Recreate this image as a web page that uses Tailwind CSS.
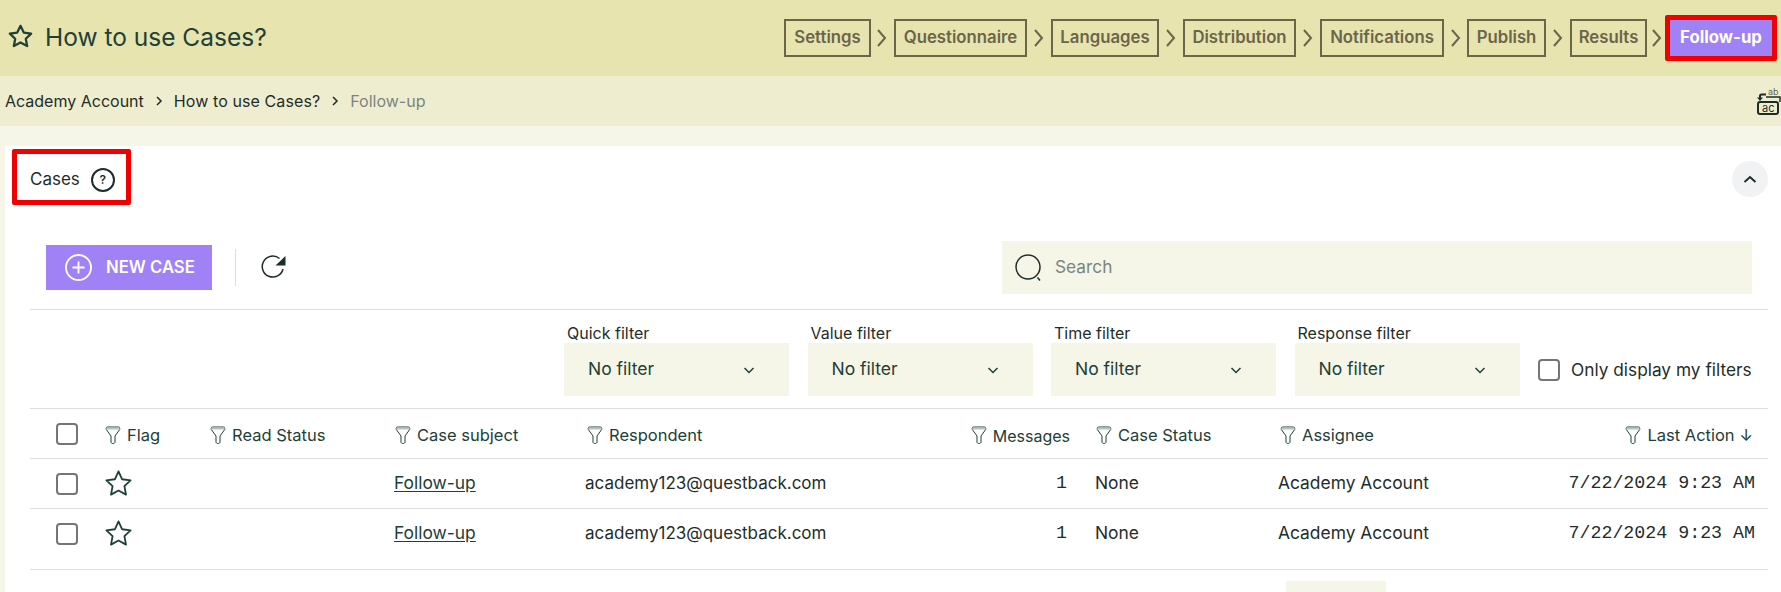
<!DOCTYPE html>
<html lang="en">
<head>
    <meta charset="UTF-8">
    <title>How to use Cases?</title>
    <script src="https://cdn.jsdelivr.net/npm/@tailwindcss/browser@4"></script>
</head>
<body class="bg-[#f5f5e8] font-['Inter',sans-serif] text-[#1f2d2a] h-[592px] overflow-hidden">
    <!-- top bar -->
    <header class="h-[76px] bg-[#e7e4b0] flex items-center justify-between pl-[7px] pr-1">
        <div class="flex items-center gap-[11px] -mt-[2px]">
            <svg class="-mt-[2px] w-[27px] h-[27px]" viewBox="0 0 24 24" fill="none" stroke="#1e4037" stroke-width="2" stroke-linejoin="round"><path d="M12 2.500l2.900 6 6.600.9-4.800 4.600 1.200 6.500-5.900-3.200-5.900 3.200 1.200-6.500L2.500 9.400l6.600-.9z"/></svg>
            <h1 class="text-[24.500px] text-[#1e4037]">How to use Cases?</h1>
        </div>
        <nav class="flex items-center text-[16.750px] font-semibold text-[#6b6549]">
            <a class="w-[87px] h-[38px] border-2 border-[#6b6549] flex items-center justify-center">Settings</a>
            <svg class="w-[23px] h-[20px]" viewBox="0 0 23 20" fill="none" stroke="#6b6549" stroke-width="2"><path d="M7 2l7 8-7 8"/></svg>
            <a class="w-[133px] h-[38px] border-2 border-[#6b6549] flex items-center justify-center">Questionnaire</a>
            <svg class="w-[24px] h-[20px]" viewBox="0 0 24 20" fill="none" stroke="#6b6549" stroke-width="2"><path d="M8 2l7 8-7 8"/></svg>
            <a class="w-[108px] h-[38px] border-2 border-[#6b6549] flex items-center justify-center">Languages</a>
            <svg class="w-[24px] h-[20px]" viewBox="0 0 24 20" fill="none" stroke="#6b6549" stroke-width="2"><path d="M8 2l7 8-7 8"/></svg>
            <a class="w-[113px] h-[38px] border-2 border-[#6b6549] flex items-center justify-center">Distribution</a>
            <svg class="w-[24px] h-[20px]" viewBox="0 0 24 20" fill="none" stroke="#6b6549" stroke-width="2"><path d="M8 2l7 8-7 8"/></svg>
            <a class="w-[124px] h-[38px] border-2 border-[#6b6549] flex items-center justify-center">Notifications</a>
            <svg class="w-[23px] h-[20px]" viewBox="0 0 23 20" fill="none" stroke="#6b6549" stroke-width="2"><path d="M8 2l7 8-7 8"/></svg>
            <a class="w-[79px] h-[38px] border-2 border-[#6b6549] flex items-center justify-center">Publish</a>
            <svg class="w-[24px] h-[20px]" viewBox="0 0 24 20" fill="none" stroke="#6b6549" stroke-width="2"><path d="M8 2l7 8-7 8"/></svg>
            <a class="w-[77px] h-[38px] border-2 border-[#6b6549] flex items-center justify-center">Results</a>
            <svg class="w-[18px] h-[20px]" viewBox="0 0 18 20" fill="none" stroke="#6b6549" stroke-width="2"><path d="M6 2l7 8-7 8"/></svg>
            <a class="w-[112px] h-[46px] border-[5px] border-[#f00000] rounded-[2px] bg-[#a082f6] text-white flex items-center justify-center font-bold">Follow-up</a>
        </nav>
    </header>

    <!-- breadcrumb -->
    <div class="h-[50px] bg-[#efedcf] flex items-center justify-between pl-[5px] text-[16px]">
        <div class="flex items-center">
            <span>Academy Account</span>
            <svg class="w-[30px] h-3" viewBox="0 0 30 12" fill="none" stroke="#1f2d2a" stroke-width="1.500"><path d="M13 2l4 4-4 4"/></svg>
            <span class="tracking-[0.1px]">How to use Cases?</span>
            <svg class="w-[30px] h-3" viewBox="0 0 30 12" fill="none" stroke="#1f2d2a" stroke-width="1.500"><path d="M13 2l4 4-4 4"/></svg>
            <span class="text-[#7a8580]">Follow-up</span>
        </div>
        <svg class="w-[25px] h-[28px]" viewBox="0 0 25 28" fill="none" stroke="#1f2d2a">
            <text x="12" y="8" font-size="9" fill="#6b6549" stroke="none" font-family="Inter">ab</text>
            <path d="M10 10h14v5" stroke-width="1.500"/>
            <path d="M10 7.500H5.500a1.500 1.500 0 0 0-1.500 1.500v2" stroke-width="2"/>
            <path d="M1 10.500h6l-3 3.500z" fill="#1f2d2a" stroke="none"/>
            <rect x="2" y="15" width="20" height="12" rx="2" stroke-width="2"/>
            <text x="6" y="25" font-size="11" fill="#1f2d2a" stroke="none" font-family="Inter">ac</text>
        </svg>
    </div>

    <!-- cases panel -->
    <main class="mt-5 ml-[5px] bg-white h-[446px]">
        <div class="h-[62px] flex items-start justify-between pr-[13px]">
            <div class="mt-[3px] ml-[7px] w-[119px] h-[56px] border-[5px] border-[#f00000] rounded-[2px] flex items-center pt-[6px] pl-[13px] gap-[11px] text-[17px]">
                <span>Cases</span>
                <span class="w-6 h-6 rounded-full border-2 border-[#1f2d2a] flex items-center justify-center text-[12px] font-semibold">?</span>
            </div>
            <button class="mt-[15px] w-[36px] h-[36px] rounded-full bg-[#f1f2f4] flex items-center justify-center">
                <svg class="w-4 h-4" viewBox="0 0 16 16" fill="none" stroke="#1f2d2a" stroke-width="2"><path d="M2.500 11l5.500-5 5.500 5"/></svg>
            </button>
        </div>

        <!-- toolbar -->
        <div class="mt-[33px] ml-[25px] mr-[13px] h-[69px] pb-[15px] pl-4 pr-4 border-b border-[#dedede] flex items-start">
            <button class="mt-1 w-[166px] h-[45px] bg-[#a082f6] text-white font-semibold text-[16.700px] flex items-center pl-[19px] gap-[14px]">
                <svg class="w-[27px] h-[27px]" viewBox="0 0 27 27" fill="none" stroke="#fff" stroke-width="1.800"><circle cx="13.500" cy="13.500" r="12.500"/><path d="M13.500 7.500v12M7.500 13.500h12"/></svg>
                NEW CASE
            </button>
            <div class="mt-2 ml-[23px] w-px h-[37px] bg-[#dedede]"></div>
            <svg class="mt-[13px] ml-[25px] w-[25px] h-[25px]" viewBox="0 0 25 25" fill="none" stroke="#1f2d2a" stroke-width="1.500"><path d="M22 15a10.500 10.500 0 1 1-3.500-10.500"/><path d="M24.500 2v9.500H14.500z" fill="#1f2d2a" stroke="none"/></svg>
            <div class="ml-auto w-[750px] h-[53px] bg-[#f5f5e8] flex items-center pl-[13px] pb-[1px] gap-[13px] text-[17.300px] text-[#7a8580]">
                <svg class="w-[27px] h-[27px]" viewBox="0 0 27 27" fill="none" stroke="#1f2d2a" stroke-width="1.500"><circle cx="13" cy="13" r="12"/><path d="M22.500 23.500l2.500 3"/></svg>
                Search
            </div>
        </div>

        <!-- filters -->
        <div class="ml-[25px] mr-[13px] h-[99px] border-b border-[#dedede] flex items-end justify-end pb-3 pr-4 gap-[18.500px]">
            <label class="block w-[225px] text-[16px]">
                <span class="block pl-[3px] mb-[-2px]">Quick filter</span>
                <span class="h-[53px] bg-[#f5f5e8] flex items-center justify-between pl-6 pr-[34px] text-[17.500px] text-[#1e4037]">No filter
                    <svg class="w-3 h-3" viewBox="0 0 12 12" fill="none" stroke="#1e4037" stroke-width="1.500"><path d="M1.500 4l4.500 4.500L10.500 4"/></svg>
                </span>
            </label>
            <label class="block w-[225px] text-[16px]">
                <span class="block pl-[3px] mb-[-2px]">Value filter</span>
                <span class="h-[53px] bg-[#f5f5e8] flex items-center justify-between pl-6 pr-[34px] text-[17.500px] text-[#1e4037]">No filter
                    <svg class="w-3 h-3" viewBox="0 0 12 12" fill="none" stroke="#1e4037" stroke-width="1.500"><path d="M1.500 4l4.500 4.500L10.500 4"/></svg>
                </span>
            </label>
            <label class="block w-[225px] text-[16px]">
                <span class="block pl-[3px] mb-[-2px]">Time filter</span>
                <span class="h-[53px] bg-[#f5f5e8] flex items-center justify-between pl-6 pr-[34px] text-[17.500px] text-[#1e4037]">No filter
                    <svg class="w-3 h-3" viewBox="0 0 12 12" fill="none" stroke="#1e4037" stroke-width="1.500"><path d="M1.500 4l4.500 4.500L10.500 4"/></svg>
                </span>
            </label>
            <label class="block w-[225px] text-[16px]">
                <span class="block pl-[3px] mb-[-2px]">Response filter</span>
                <span class="h-[53px] bg-[#f5f5e8] flex items-center justify-between pl-6 pr-[34px] text-[17.500px] text-[#1e4037]">No filter
                    <svg class="w-3 h-3" viewBox="0 0 12 12" fill="none" stroke="#1e4037" stroke-width="1.500"><path d="M1.500 4l4.500 4.500L10.500 4"/></svg>
                </span>
            </label>
            <label class="w-[214px] h-[53px] flex items-center gap-[11px] text-[17.300px] whitespace-nowrap">
                <span class="w-[22px] h-[22px] shrink-0 rounded-[4px] border-2 border-[#757575]"></span>
                Only display my filters
            </label>
        </div>

        <!-- table -->
        <div class="ml-[25px] mr-[13px] text-[17.400px]">
            <div class="h-[50px] pt-[4px] border-b border-[#dedede] grid grid-cols-[75px_105px_185px_190px_490px_21px_184px_1fr] items-center text-[16.500px] text-[#1e4037]">
                <span class="-mt-[4px] ml-[26px] w-[22px] h-[22px] rounded-[4px] border-2 border-[#757575]"></span>
                <span class="flex items-center gap-[6px]"><svg class="w-[16px] h-[19px]" viewBox="0 0 15 19" fill="none" stroke="#1e4037"><path d="M2 1h11c.8 0 1.200.5 1.200 1.200v1.300L9.500 10v6c0 1-1 1.500-2 1.500s-2-.5-2-1.500v-6L.8 3.500V2.200C.8 1.500 1.200 1 2 1z" fill="#fff"/><path d="M1 1.500h13v2H1z" fill="#b9c2bd" stroke="none"/></svg>Flag</span>
                <span class="flex items-center gap-[6px]"><svg class="w-[16px] h-[19px]" viewBox="0 0 15 19" fill="none" stroke="#1e4037"><path d="M2 1h11c.8 0 1.200.5 1.200 1.200v1.300L9.500 10v6c0 1-1 1.500-2 1.500s-2-.5-2-1.500v-6L.8 3.500V2.200C.8 1.500 1.200 1 2 1z" fill="#fff"/><path d="M1 1.500h13v2H1z" fill="#b9c2bd" stroke="none"/></svg>Read Status</span>
                <span class="flex items-center gap-[6px]"><svg class="w-[16px] h-[19px]" viewBox="0 0 15 19" fill="none" stroke="#1e4037"><path d="M2 1h11c.8 0 1.200.5 1.200 1.200v1.300L9.500 10v6c0 1-1 1.500-2 1.500s-2-.5-2-1.500v-6L.8 3.500V2.200C.8 1.500 1.200 1 2 1z" fill="#fff"/><path d="M1 1.500h13v2H1z" fill="#b9c2bd" stroke="none"/></svg>Case subject</span>
                <span class="flex items-center justify-between pl-[2px] pr-[5px]">
                    <span class="flex items-center gap-[6px]"><svg class="w-[16px] h-[19px]" viewBox="0 0 15 19" fill="none" stroke="#1e4037"><path d="M2 1h11c.8 0 1.200.5 1.200 1.200v1.300L9.500 10v6c0 1-1 1.500-2 1.500s-2-.5-2-1.500v-6L.8 3.500V2.200C.8 1.500 1.200 1 2 1z" fill="#fff"/><path d="M1 1.500h13v2H1z" fill="#b9c2bd" stroke="none"/></svg>Respondent</span>
                    <span class="flex items-center gap-[6px]"><svg class="w-[16px] h-[19px]" viewBox="0 0 15 19" fill="none" stroke="#1e4037"><path d="M2 1h11c.8 0 1.200.5 1.200 1.200v1.300L9.500 10v6c0 1-1 1.500-2 1.500s-2-.5-2-1.500v-6L.8 3.500V2.200C.8 1.500 1.200 1 2 1z" fill="#fff"/><path d="M1 1.500h13v2H1z" fill="#b9c2bd" stroke="none"/></svg><span class="text-[16px]">Messages</span></span>
                </span>
                <span></span>
                <span class="flex items-center gap-[6px]"><svg class="w-[16px] h-[19px]" viewBox="0 0 15 19" fill="none" stroke="#1e4037"><path d="M2 1h11c.8 0 1.200.5 1.200 1.200v1.300L9.500 10v6c0 1-1 1.500-2 1.500s-2-.5-2-1.500v-6L.8 3.500V2.200C.8 1.500 1.200 1 2 1z" fill="#fff"/><path d="M1 1.500h13v2H1z" fill="#b9c2bd" stroke="none"/></svg>Case Status</span>
                <span class="flex items-center justify-between pr-[15px]">
                    <span class="flex items-center gap-[6px]"><svg class="w-[16px] h-[19px]" viewBox="0 0 15 19" fill="none" stroke="#1e4037"><path d="M2 1h11c.8 0 1.200.5 1.200 1.200v1.300L9.500 10v6c0 1-1 1.500-2 1.500s-2-.5-2-1.500v-6L.8 3.500V2.200C.8 1.500 1.200 1 2 1z" fill="#fff"/><path d="M1 1.500h13v2H1z" fill="#b9c2bd" stroke="none"/></svg>Assignee</span>
                    <span class="flex items-center gap-[6px]"><svg class="w-[16px] h-[19px]" viewBox="0 0 15 19" fill="none" stroke="#1e4037"><path d="M2 1h11c.8 0 1.200.5 1.200 1.200v1.300L9.500 10v6c0 1-1 1.500-2 1.500s-2-.5-2-1.500v-6L.8 3.500V2.200C.8 1.500 1.200 1 2 1z" fill="#fff"/><path d="M1 1.500h13v2H1z" fill="#b9c2bd" stroke="none"/></svg>Last Action ↓</span>
                </span>
            </div>
            <div class="h-[50px] border-b border-[#dedede] grid grid-cols-[75px_105px_185px_190px_490px_21px_184px_1fr] items-center">
                <span class="ml-[26px] w-[22px] h-[22px] rounded-[4px] border-2 border-[#757575]"></span>
                <svg class="-ml-[1px] -mt-[1px] w-[29px] h-[29px]" viewBox="0 0 24 24" fill="none" stroke="#1e4037" stroke-width="1.500" stroke-linejoin="round"><path d="M12 2l3 6.500 7 .9-5.100 4.800 1.300 7L12 17.800l-6.200 3.400 1.300-7L2 9.400l7-.9z"/></svg>
                <span></span>
                <a class="underline underline-offset-2 text-[#1e4037] -ml-[1px]">Follow-up</a>
                <span class="flex items-center justify-between pr-2"><span class="text-[17px]">academy123@questback.com</span><span class="font-['Liberation_Mono',monospace] text-[18.300px]">1</span></span>
                <span></span>
                <span class="-ml-[1px]">None</span>
                <span class="flex items-center justify-between pr-[13px] -ml-[2px]"><span>Academy Account</span><span class="font-['Liberation_Mono',monospace] text-[18.300px]">7/22/2024 9:23 AM</span></span>
            </div>
            <div class="h-[61px] border-b border-[#dedede] pb-[11px] grid grid-cols-[75px_105px_185px_190px_490px_21px_184px_1fr] items-center">
                <span class="ml-[26px] w-[22px] h-[22px] rounded-[4px] border-2 border-[#757575]"></span>
                <svg class="-ml-[1px] -mt-[1px] w-[29px] h-[29px]" viewBox="0 0 24 24" fill="none" stroke="#1e4037" stroke-width="1.500" stroke-linejoin="round"><path d="M12 2l3 6.500 7 .9-5.100 4.800 1.300 7L12 17.800l-6.200 3.400 1.300-7L2 9.400l7-.9z"/></svg>
                <span></span>
                <a class="underline underline-offset-2 text-[#1e4037] -ml-[1px]">Follow-up</a>
                <span class="flex items-center justify-between pr-2"><span class="text-[17px]">academy123@questback.com</span><span class="font-['Liberation_Mono',monospace] text-[18.300px]">1</span></span>
                <span></span>
                <span class="-ml-[1px]">None</span>
                <span class="flex items-center justify-between pr-[13px] -ml-[2px]"><span>Academy Account</span><span class="font-['Liberation_Mono',monospace] text-[18.300px]">7/22/2024 9:23 AM</span></span>
            </div>
            <!-- pager, cut off by the window -->
            <div class="mt-[11px] ml-[1256px] w-[100px] h-[30px] bg-[#f5f5e8]"></div>
        </div>
    </main>
</body>
</html>
